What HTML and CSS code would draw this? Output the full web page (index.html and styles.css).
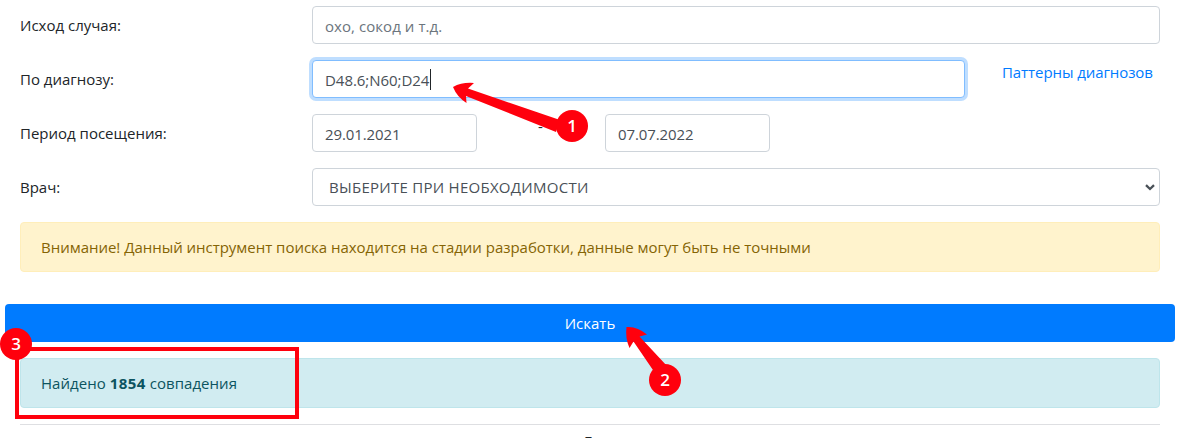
FILE: index.html
```html
<!DOCTYPE html>
<html lang="ru">
<head>
<meta charset="utf-8">
<title>Поиск случаев</title>
<link rel="stylesheet" href="styles.css">
</head>
<body>
<main class="page">
  <form class="search-form">
    <div class="row">
      <label class="label" for="outcome">Исход случая:</label>
      <input class="control hint" id="outcome" type="text" placeholder="охо, сокод и т.д.">
    </div>
    <div class="row">
      <label class="label" for="diagnosis">По диагнозу:</label>
      <div class="diagnosis">
        <div class="diagnosis-field">
          <input class="control control-focused codes" id="diagnosis" type="text" value="D48.6;N60;D24">
          <span class="caret"></span>
        </div>
        <a class="patterns">Паттерны диагнозов</a>
      </div>
    </div>
    <div class="row">
      <label class="label" for="from">Период посещения:</label>
      <div class="period">
        <input class="control date" id="from" type="text" value="29.01.2021">
        <span class="dash">-</span>
        <input class="control date" id="to" type="text" value="07.07.2022">
      </div>
    </div>
    <div class="row">
      <label class="label" for="doctor">Врач:</label>
      <div class="select-box">
        <select class="control select" id="doctor"><option>ВЫБЕРИТЕ ПРИ НЕОБХОДИМОСТИ</option></select>
        <svg class="chevron" width="10" height="7" viewBox="0 0 10 7"><path d="M1 1.2 5 5 9 1.2" fill="none" stroke="#495057" stroke-width="2.3"/></svg>
      </div>
    </div>
    <div class="alert alert-warning">Внимание! Данный инструмент поиска находится на стадии разработки, данные могут быть не точными</div>
    <button class="submit" type="button">Искать</button>
  </form>
  <div class="alert alert-info">Найдено <b class="count">1854</b> совпадения</div>
  <hr class="divider">
  <div class="results-title">Г</div>
</main>
<svg class="annotations" width="1187" height="438" viewBox="0 0 1187 438">
  <rect x="17" y="349" width="280" height="68" fill="none" stroke="#ff000d" stroke-width="4"/>
  <g fill="#ff000d">
    <path d="M453 87Q462 82 474 83L468 88.500 560 120 556 132 466 96 466.500 103Q457 97 453 87Z"/>
    <circle cx="572" cy="126" r="16"/>
    <path d="M626.500 327Q637 326 647 334.500L639.500 336.500 667 366 655 373 633.500 341.500 629.500 348Q625 338 626.500 327Z"/>
    <circle cx="665" cy="380" r="16"/>
    <circle cx="16" cy="344" r="16"/>
  </g>
  <g class="marker-text">
    <text x="572" y="132">1</text>
    <text x="665" y="386">2</text>
    <text x="16" y="350">3</text>
  </g>
</svg>
</body>
</html>
```
FILE: styles.css
```css
* { box-sizing: border-box; }

body {
  margin: 0;
  height: 438px;
  overflow: hidden;
  position: relative;
  background: #fff;
  color: #212529;
  font: 15px/24px "Open Sans", "Noto Sans", sans-serif;
}

.page { padding: 6px 27px 0 20px; }

.row {
  display: grid;
  grid-template-columns: 292px 848px;
  height: 38px;
  margin-bottom: 16px;
}

.label { padding-top: 7px; white-space: nowrap; }

.control {
  display: block;
  width: 100%;
  height: 38px;
  margin: 0;
  padding: 7px 12px 5px;
  border: 1px solid #ced4da;
  border-radius: 4px;
  background: #fff;
  color: #495057;
  font: inherit;
  outline: 0;
}
.control::placeholder { color: #6c757d; opacity: 1; }
.control-focused { border-color: #80bdff; box-shadow: 0 0 0 3px #bfdeff; }
.hint { letter-spacing: 0.06px; }
.codes { letter-spacing: -0.04px; }
.date { letter-spacing: -0.1px; }

.diagnosis { display: grid; grid-template-columns: 653px 1fr; column-gap: 37px; }
.diagnosis-field { position: relative; }
.caret { position: absolute; left: 118px; top: 9px; width: 1px; height: 21px; background: #212529; }
.patterns { color: #007bff; white-space: nowrap; letter-spacing: -0.08px; }

.period { display: grid; grid-template-columns: 165px 128px 165px; }
.dash { padding-left: 61px; line-height: 25px; }

.select-box { position: relative; }
.select { appearance: none; padding: 6px 16px; letter-spacing: 0.27px; }
.chevron { position: absolute; right: 5px; top: 16px; }

.alert {
  height: 50px;
  padding: 12px 20px;
  border: 1px solid;
  border-radius: 4px;
  white-space: nowrap;
}
.alert-warning { color: #856404; background: #fff3cd; border-color: #ffeeba; letter-spacing: -0.022px; }
.alert-info { color: #0c5460; background: #d1ecf1; border-color: #bee5eb; letter-spacing: 0.04px; }
.count { letter-spacing: 0.45px; }

.submit {
  display: block;
  width: 1170px;
  height: 38px;
  margin: 32px 0 16px -15px;
  padding: 0;
  border: 0;
  border-radius: 4px;
  background: #007bff;
  color: #fff;
  font: inherit;
}

.divider { height: 1px; margin: 16px 0 0; border: 0; background: #dedfe2; }
.results-title { margin-top: 4px; padding-right: 4px; text-align: center; }

.annotations { position: absolute; left: 0; top: 0; }
.marker-text { fill: #fff; font-size: 17px; font-weight: 600; text-anchor: middle; }
```
